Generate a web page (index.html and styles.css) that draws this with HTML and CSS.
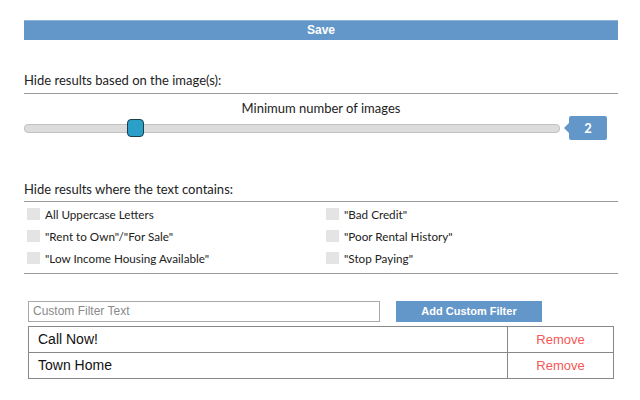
FILE: index.html
```html
<!DOCTYPE html>
<html>
<head>
<meta charset="utf-8">
<link rel="stylesheet" href="styles.css">
</head>
<body>
<div class="page">
  <div class="save">Save</div>

  <div class="section-title">Hide results based on the image(s):</div>
  <div class="min-label">Minimum number of images</div>
  <div class="slider-row">
    <div class="track"><div class="thumb"></div></div>
    <div class="bubble">2</div>
  </div>

  <div class="section-title second">Hide results where the text contains:</div>
  <div class="checks">
    <label class="check"><span class="box"></span>All Uppercase Letters</label>
    <label class="check"><span class="box"></span>"Bad Credit"</label>
    <label class="check"><span class="box"></span>"Rent to Own"/"For Sale"</label>
    <label class="check"><span class="box"></span>"Poor Rental History"</label>
    <label class="check"><span class="box"></span>"Low Income Housing Available"</label>
    <label class="check"><span class="box"></span>"Stop Paying"</label>
  </div>

  <div class="custom-row">
    <div class="input">Custom Filter Text</div>
    <div class="add-btn">Add Custom Filter</div>
  </div>

  <div class="filters">
    <div class="frow">
      <div class="fname">Call Now!</div>
      <div class="fremove">Remove</div>
    </div>
    <div class="frow">
      <div class="fname">Town Home</div>
      <div class="fremove">Remove</div>
    </div>
  </div>
</div>
</body>
</html>
```

FILE: styles.css
```css
html, body {
  margin: 0;
  padding: 0;
  background: #fff;
}

.page {
  width: 594px;
  padding: 20px 0 0 24px;
  font-family: "Lato", "Open Sans", sans-serif;
  color: #222;
}

.save {
  height: 20px;
  background: #6497c9;
  border-top: 1px solid #8db3da;
  box-sizing: border-box;
  color: #fff;
  font-family: "Liberation Sans", Arial, sans-serif;
  font-weight: bold;
  font-size: 12px;
  line-height: 19px;
  text-align: center;
}

.section-title {
  margin-top: 31px;
  font-size: 13px;
  line-height: 18px;
  padding-bottom: 4px;
  border-bottom: 1px solid #9a9a9a;
}

.section-title.second {
  margin-top: 40px;
  padding-bottom: 3px;
}

.min-label {
  margin-top: 6px;
  font-size: 13px;
  line-height: 16px;
  text-align: center;
}

.slider-row {
  display: flex;
  align-items: center;
  height: 24px;
}

.track {
  position: relative;
  width: 534px;
  height: 7px;
  background: #dcdcdc;
  border: 1px solid #c2c2c2;
  border-radius: 4px;
}

.thumb {
  position: absolute;
  left: 102px;
  top: -6px;
  width: 15px;
  height: 16px;
  background: #2aa0c8;
  border: 1px solid #1d3f4c;
  border-radius: 4px;
}

.bubble {
  position: relative;
  margin-left: 9px;
  width: 38px;
  height: 24px;
  background: #6497c9;
  border-radius: 2px;
  color: #fff;
  font-family: "Lato", sans-serif;
  font-weight: bold;
  font-size: 13px;
  line-height: 24px;
  text-align: center;
}

.bubble::before {
  content: "";
  position: absolute;
  left: -5px;
  top: 7px;
  border-top: 5px solid transparent;
  border-bottom: 5px solid transparent;
  border-right: 5px solid #6497c9;
}

.checks {
  display: grid;
  grid-template-columns: 299px 1fr;
  grid-auto-rows: 22px;
  padding: 1px 0 4px 3px;
  border-bottom: 1px solid #9a9a9a;
}

.check {
  display: flex;
  align-items: center;
  font-size: 11.7px;
  color: #222;
}

.box {
  width: 13px;
  height: 12px;
  background: #e4e4e4;
  margin-right: 5px;
}

.custom-row {
  display: flex;
  margin-top: 27px;
  margin-left: 4px;
  gap: 16px;
}

.input {
  width: 352px;
  height: 21px;
  box-sizing: border-box;
  border: 1px solid #a9a9a9;
  padding-left: 4px;
  font-family: "Liberation Sans", Arial, sans-serif;
  font-size: 12px;
  line-height: 19px;
  color: #8a8a8a;
}

.add-btn {
  width: 146px;
  height: 21px;
  background: #6497c9;
  color: #fff;
  font-family: "Liberation Sans", Arial, sans-serif;
  font-weight: bold;
  font-size: 11px;
  line-height: 21px;
  text-align: center;
}

.filters {
  margin-top: 4px;
  margin-left: 4px;
  width: 586px;
  border: 1px solid #888;
  border-bottom: none;
  box-sizing: border-box;
}

.frow {
  display: flex;
  height: 26px;
  border-bottom: 1px solid #888;
  box-sizing: border-box;
  font-family: "Liberation Sans", Arial, sans-serif;
  line-height: 25px;
}

.fname {
  flex: 1;
  padding-left: 9px;
  font-size: 14px;
  color: #111;
  border-right: 1px solid #888;
}

.fremove {
  width: 105px;
  text-align: center;
  font-size: 13px;
  color: #f55757;
}
```
